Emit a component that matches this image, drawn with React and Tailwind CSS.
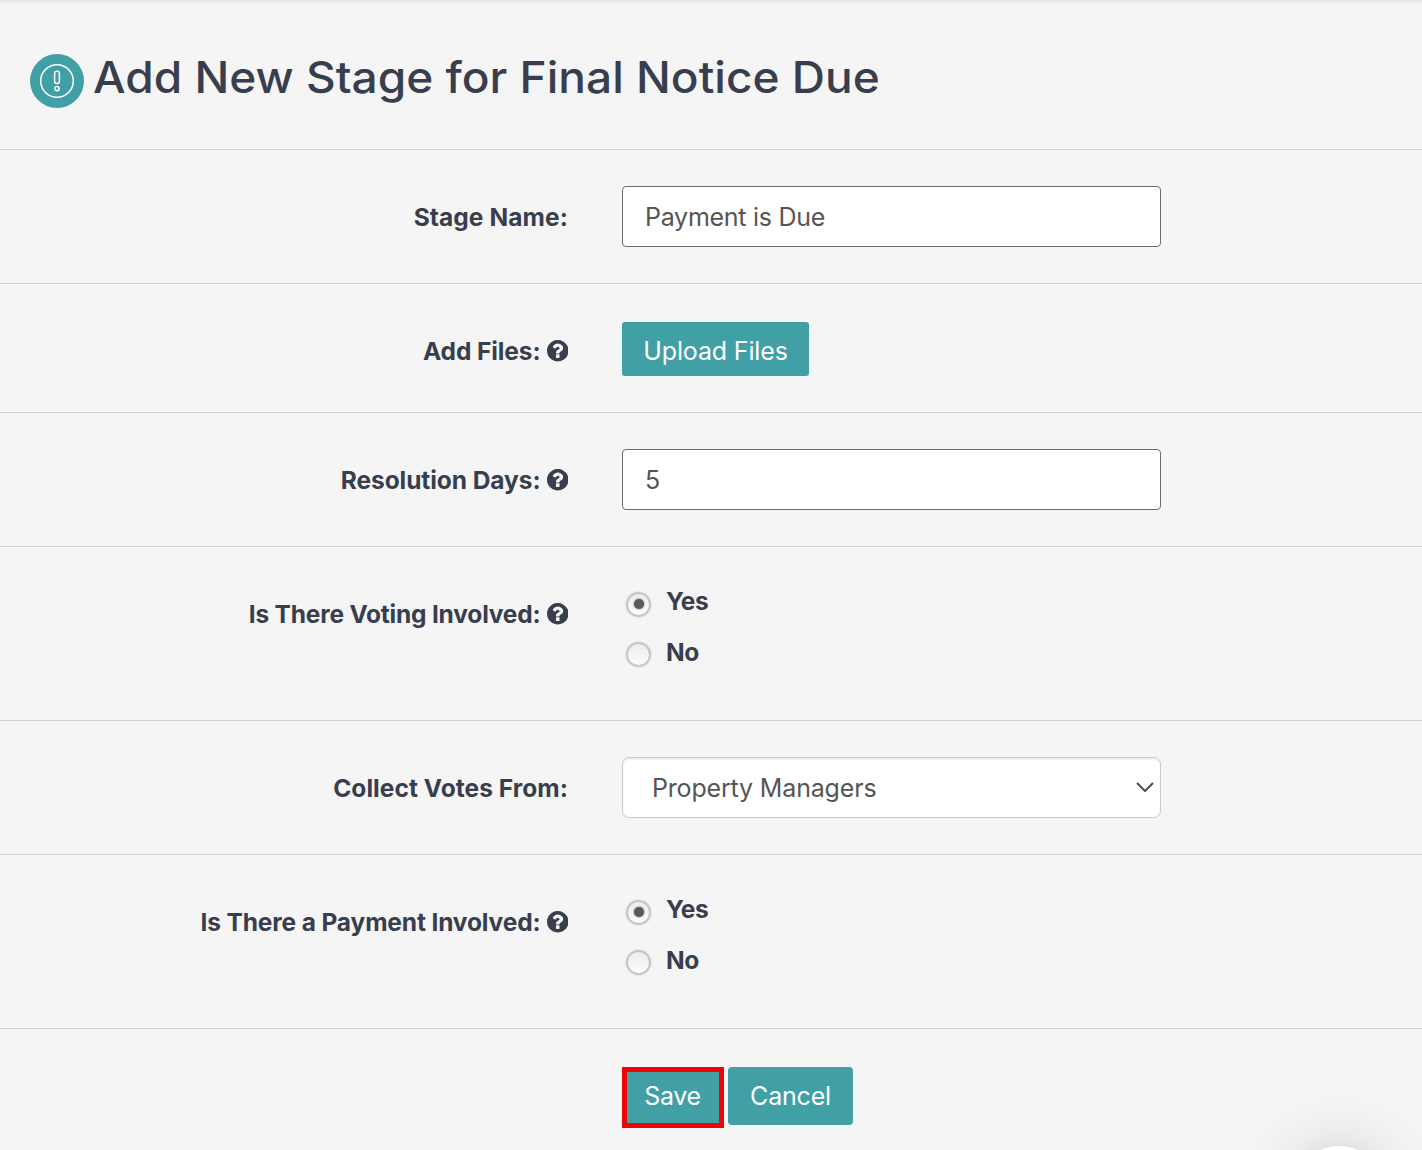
import React, { useState } from 'react';

function HelpIcon() {
  return (
    <svg className="ml-[6px] h-[21.5px] w-[21.5px] shrink-0" viewBox="0 0 1536 1536" fill="currentColor">
      <path d="M896 1248v-192q0-14-9-23t-23-9H672q-14 0-23 9t-9 23v192q0 14 9 23t23 9h192q14 0 23-9t9-23zm256-672q0-88-55.5-163T958 297t-170-41q-243 0-371 213-15 24 8 42l132 100q7 6 19 6 16 0 25-12 53-68 86-92 34-24 86-24 48 0 85.500 26t37.500 59q0 38-20 61t-68 45q-63 28-115.500 86.500T640 892v36q0 14 9 23t23 9h192q14 0 23-9t9-23q0-19 21.500-49.500T972 829q32-18 49-28.500t46-35 44.500-48 28-60.500 12.500-81zm384 192q0 209-103 385.500T1153.500 1433 768 1536t-385.500-103T103 1153.500 0 768t103-385.500T382.500 103 768 0t385.500 103T1433 382.500 1536 768z" />
    </svg>
  );
}

function Row({ height, label, labelClass, help, children, last }) {
  return (
    <div className={`flex items-start ${height} ${last ? '' : 'border-b border-[#cfd0d1]'}`}>
      <div className="flex w-[568px] shrink-0 items-center justify-end pt-[49px] text-[24.5px] leading-[36px] font-bold text-[#383e4d]">
        {label && <span className={`whitespace-nowrap ${labelClass}`}>{label}</span>}
        {help && <HelpIcon />}
      </div>
      <div className="ml-[54px]">{children}</div>
    </div>
  );
}

function Radio({ label, checked, onChange }) {
  return (
    <label className="flex h-[50.5px] items-start">
      <span className="mt-[8.5px] ml-[4px] flex h-[25px] w-[25px] shrink-0 items-center justify-center rounded-full border-2 border-[#c6c6c6] bg-linear-to-b from-[#ececec] to-[#fdfdfd] shadow-[0_0_2px_rgba(0,0,0,0.2)]">
        {checked && <span className="h-[10px] w-[10px] rounded-full bg-[#5a5a5a] shadow-[0_0_2px_#5a5a5a]" />}
      </span>
      <input type="radio" className="sr-only" checked={checked} onChange={onChange} />
      <span className="ml-[15px] text-[24.5px] leading-[36px] font-bold tracking-[-0.4px] text-[#383e4d]">{label}</span>
    </label>
  );
}

function YesNo() {
  const [value, setValue] = useState('Yes');

  return (
    <div className="pt-[36px]">
      <Radio label="Yes" checked={value === 'Yes'} onChange={() => setValue('Yes')} />
      <Radio label="No" checked={value === 'No'} onChange={() => setValue('No')} />
    </div>
  );
}

export default function App() {
  const [stageName, setStageName] = useState('Payment is Due');
  const [days, setDays] = useState('5');

  return (
    <div className="relative h-[1150px] w-[1422px] overflow-hidden bg-[#f5f5f5] font-['Inter',sans-serif] text-[#383e4d]">
      <header className="flex h-[150px] items-start border-b border-[#cfd0d1] bg-linear-to-b from-[#e6e6e6] to-[#f5f5f5] to-[4px] pl-[30px]">
        <svg className="mt-[54px] h-[54px] w-[54px] shrink-0" viewBox="0 0 54 54" fill="none">
          <circle cx="27" cy="27" r="27" fill="#419fa6" />
          <g stroke="#fff" strokeWidth="1.5">
            <circle cx="27" cy="27" r="16.3" />
            <rect x="24.6" y="17.3" width="4.8" height="12.2" rx="2.2" />
            <circle cx="27" cy="34.6" r="2.1" />
          </g>
        </svg>
        <h1 className="ml-[9px] origin-left scale-x-[1.046] pt-[47px] text-[44px] leading-[60px] font-medium whitespace-nowrap">
          Add New Stage for Final Notice Due
        </h1>
      </header>

      <Row height="h-[134px]" label="Stage Name:" labelClass="tracking-[0.1px]">
        <input
          className="mt-[36px] block h-[61px] w-[539px] rounded-[4px] border border-[#6b6b6b] bg-white px-[22px] text-[25px] tracking-[-0.27px] text-[#555]"
          value={stageName}
          onChange={(e) => setStageName(e.target.value)}
        />
      </Row>

      <Row height="h-[129px]" label="Add Files:" labelClass="tracking-[-0.1px]" help>
        <button className="mt-[38px] block h-[54px] w-[187px] rounded-[3px] bg-[#419fa6] pt-[5px] text-[25px] tracking-[-0.15px] whitespace-nowrap text-white">
          Upload Files
        </button>
      </Row>

      <Row height="h-[134px]" label="Resolution Days:" labelClass="tracking-[-0.07px]" help>
        <input
          className="mt-[36px] block h-[61px] w-[539px] rounded-[4px] border border-[#6b6b6b] bg-white px-[22px] text-[25px] text-[#555]"
          value={days}
          onChange={(e) => setDays(e.target.value)}
        />
      </Row>

      <Row height="h-[174px]" label="Is There Voting Involved:" labelClass="tracking-[-0.2px]" help>
        <YesNo />
      </Row>

      <Row height="h-[134px]" label="Collect Votes From:" labelClass="tracking-[0.06px]">
        <div className="mt-[36px] flex h-[61px] w-[539px] items-center justify-between rounded-[7px] border border-[#c9cacc] bg-white pr-[6px] pl-[29px] text-[25px] text-[#555] shadow-[inset_0_2px_2px_rgba(0,0,0,0.07)]">
          <span className="pt-[2px] tracking-[-0.17px]">Property Managers</span>
          <svg className="mb-[2px] h-[10px] w-[18px]" viewBox="0 0 18 10" fill="none" stroke="#4d4d4d" strokeWidth="2">
            <path d="M1 1l8 8 8-8" />
          </svg>
        </div>
      </Row>

      <Row height="h-[174px]" label="Is There a Payment Involved:" labelClass="tracking-[-0.14px]" help>
        <YesNo />
      </Row>

      <Row height="h-[121px]" last>
        <div className="flex items-start gap-[4px] pt-[38px] text-[25px] text-white">
          <button className="h-[61px] w-[102px] border-[5px] border-[#ec0606] bg-[#419fa6] pr-px pb-px pl-0 tracking-[-0.3px]">Save</button>
          <button className="h-[58px] w-[125px] rounded-[4px] bg-[#419fa6] pt-px tracking-[-0.2px]">Cancel</button>
        </div>
      </Row>

      {/* chat launcher peeking in from the bottom edge */}
      <div className="absolute top-[1146px] left-[1292px] h-[94px] w-[94px] rounded-full bg-white shadow-[0_2px_70px_rgba(0,0,0,0.16),0_6px_24px_rgba(0,0,0,0.08)]" />
    </div>
  );
}
